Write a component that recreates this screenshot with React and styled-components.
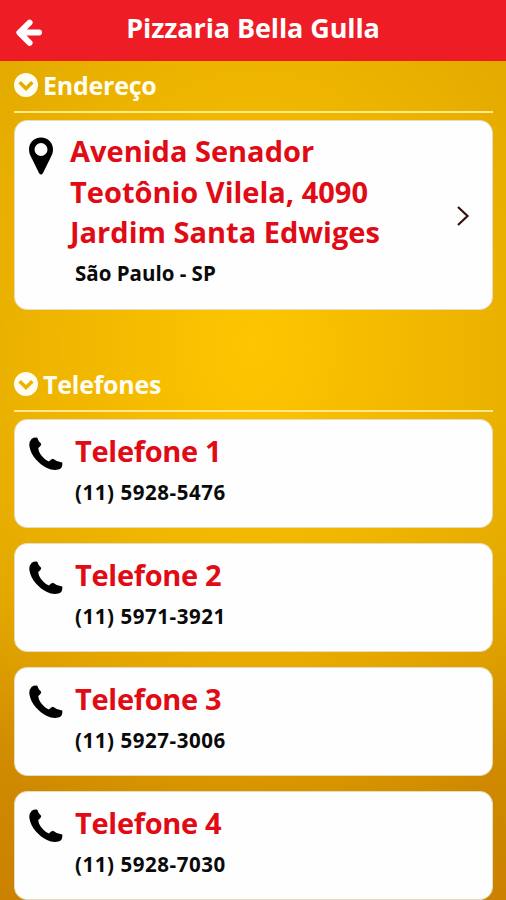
import React from "react";
import styled, { createGlobalStyle } from "styled-components";

const GlobalStyle = createGlobalStyle`
  * { box-sizing: border-box; }
  body { margin: 0; overflow: hidden; }
  h1, h2, h3, p { margin: 0; }
`;

const Screen = styled.div`
  height: 900px;
  overflow: hidden;
  display: flex;
  flex-direction: column;
  font-family: "Open Sans", "Noto Sans", sans-serif;
  background:
    radial-gradient(ellipse 400px 540px at 50% 345px, #fdc600 0%, rgba(250, 192, 0, 0.72) 38%, rgba(225, 160, 0, 0) 100%),
    linear-gradient(180deg, #dca400 0%, #dfa600 45%, #dca000 66%, #d08c00 82%, #cb8200 100%);
`;

const Header = styled.header`
  flex: none;
  height: 61px;
  display: grid;
  grid-template-columns: 28px 1fr 28px;
  padding: 0 15px;
  background: #ee1c25;
  border-bottom: 1px solid #e8200e;
`;

const BackIcon = styled.svg`
  width: 28px;
  height: 28px;
  margin-top: 19px;
`;

const Title = styled.h1`
  padding-top: 8px;
  font-size: 27px;
  line-height: 40px;
  font-weight: 700;
  letter-spacing: -0.1px;
  text-align: center;
  color: #fff;
  white-space: nowrap;
`;

const Section = styled.section`
  flex: none;
  margin: 0 13px 0 14px;
  height: ${(p) => p.$height || "auto"};
`;

const SectionHeader = styled.div`
  display: flex;
  align-items: flex-start;
  height: 52px;
  padding-top: 12px;
  border-bottom: 2px solid #ffe98c;
`;

const SectionTitle = styled.h2`
  margin: -5px 0 0 5px;
  font-size: 25px;
  line-height: 35px;
  font-weight: 700;
  letter-spacing: -0.25px;
  color: #fffdf2;
`;

const CardList = styled.div`
  display: flex;
  flex-direction: column;
  gap: 15px;
  margin-top: 7px;
`;

const Card = styled.article`
  flex: none;
  display: grid;
  grid-template-columns: 60px 1fr 36px;
  height: ${(p) => p.$height}px;
  padding-top: 11px;
  border: 1px solid #e6dcc0;
  border-radius: 13px;
  background: #fefefe;
`;

const Details = styled.div`
  margin-top: ${(p) => p.$lift || 0}px;
  white-space: nowrap;
`;

const Name = styled.h3`
  margin-left: ${(p) => p.$shift || 0}px;
  font-size: 29px;
  line-height: 40.5px;
  font-weight: 700;
  letter-spacing: ${(p) => p.$spacing || 0}px;
  color: #e00b14;
`;

const Sub = styled.p`
  font-size: 20.5px;
  line-height: 40px;
  font-weight: 700;
  letter-spacing: ${(p) => p.$spacing || 0}px;
  color: #0a0a0a;
`;

const PinSvg = styled.svg`
  width: 26px;
  height: 38px;
  margin: 5px 0 0 13px;
`;

const PhoneSvg = styled.svg`
  width: 34px;
  height: 34px;
  margin: 6px 0 0 14px;
`;

const ArrowSvg = styled.svg`
  width: 14px;
  height: 22px;
  margin-top: 73px;
`;

const CheckSvg = styled.svg`
  flex: none;
  width: 24px;
  height: 24px;
`;

function SectionTop({ children }) {
  return (
    <SectionHeader>
      <CheckSvg viewBox="0 0 24 24">
        <path
          fillRule="evenodd"
          fill="#fffdf2"
          d="M12 0a12 12 0 1 0 0 24a12 12 0 1 0 0-24zM12 18L4.400 10.500L6.900 8L12 12.900L17.100 8L19.600 10.500z"
        />
      </CheckSvg>
      <SectionTitle>{children}</SectionTitle>
    </SectionHeader>
  );
}

const phones = [
  ["Telefone 1", "(11) 5928-5476"],
  ["Telefone 2", "(11) 5971-3921"],
  ["Telefone 3", "(11) 5927-3006"],
  ["Telefone 4", "(11) 5928-7030"],
];

export default function App() {
  return (
    <Screen>
      <GlobalStyle />
      <Header>
        <BackIcon
          viewBox="0 0 28 28"
          fill="none"
          stroke="#fff"
          strokeWidth="6"
          strokeLinejoin="round"
          strokeLinecap="round"
        >
          <path d="M24 13.600H6M14.600 3.600L4.400 13.600L14.600 23.800" />
        </BackIcon>
        <Title>Pizzaria Bella Gulla</Title>
      </Header>
      <Section $height="299px">
        <SectionTop>Endereço</SectionTop>
        <CardList>
          <Card $height={190}>
            <PinSvg viewBox="0 0 26 38">
              <path
                fillRule="evenodd"
                d="M13 .5C6 .5 1 5.700 1 12.500C1 16 2.300 18.500 3.600 21L11 36Q13 39 15 36L22.400 21C23.700 18.500 25 16 25 12.500C25 5.700 20 .5 13 .5zM13 6a6.500 6.500 0 1 1 0 13a6.500 6.500 0 1 1 0-13z"
              />
            </PinSvg>
            <Details $lift={-1}>
              <Name $shift={-5}>
                Avenida Senador
                <br />
                Teotônio Vilela, 4090
                <br />
                Jardim Santa Edwiges
              </Name>
              <Sub>São Paulo - SP</Sub>
            </Details>
            <ArrowSvg viewBox="0 0 14 22" fill="none" stroke="#35120f" strokeWidth="2.2">
              <path d="M2 2L11.500 11L2 20" />
            </ArrowSvg>
          </Card>
        </CardList>
      </Section>
      <Section>
        <SectionTop>Telefones</SectionTop>
        <CardList>
          {phones.map(([name, number]) => (
            <Card key={name} $height={109}>
              <PhoneSvg viewBox="0 0 34 34">
                <path d="M2.500 2Q5 .2 8.300.7Q9.200 4.300 12.300 7Q11.800 9.700 9.300 11C9.500 16 14.500 22.300 20 24.600Q21.500 22.500 24 21.800Q28 25.200 33.200 25.600Q33.800 28.500 32.200 31C28.500 34 22.500 33.200 18 31C9.500 26.700 2.300 19.200.5 9.800Q-.3 5 2.500 2z" />
              </PhoneSvg>
              <Details>
                <Name $spacing={-0.3}>{name}</Name>
                <Sub $spacing={0.55}>{number}</Sub>
              </Details>
            </Card>
          ))}
        </CardList>
      </Section>
    </Screen>
  );
}
